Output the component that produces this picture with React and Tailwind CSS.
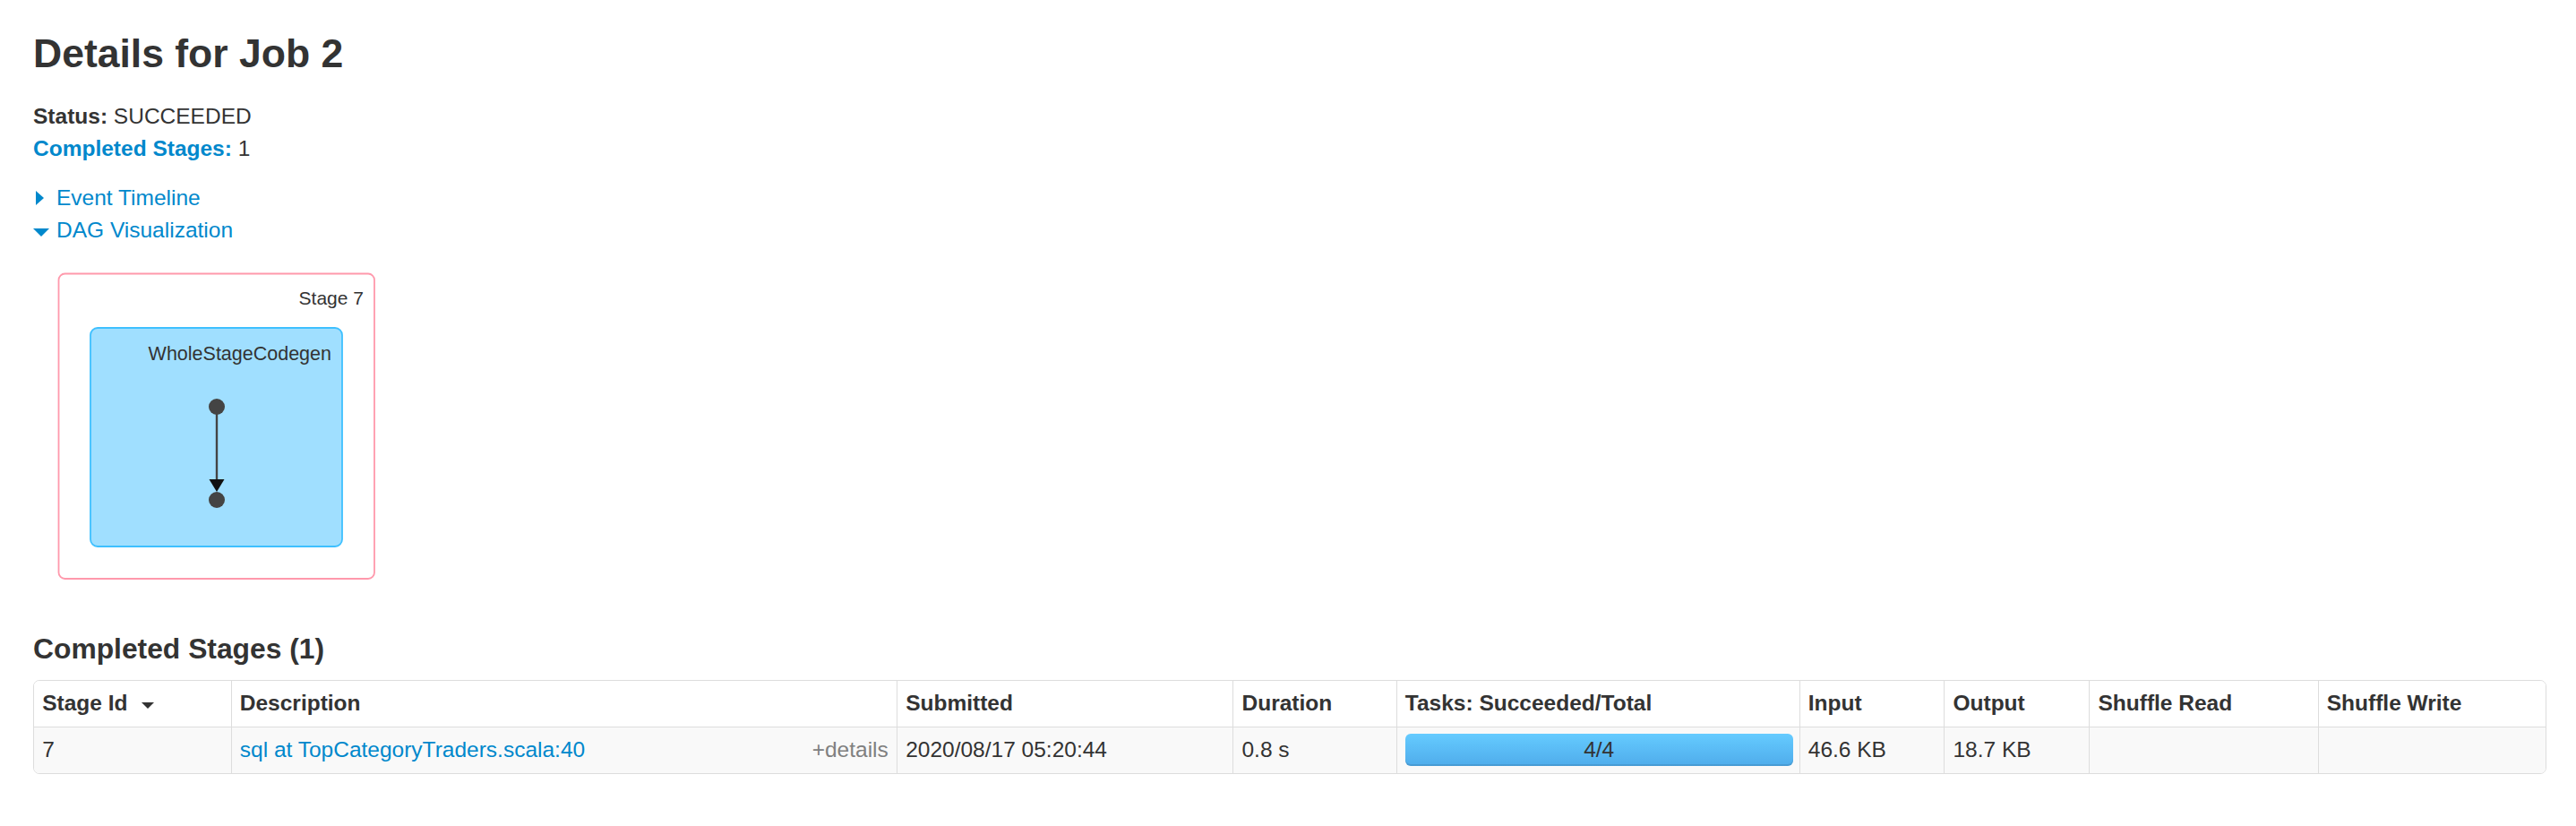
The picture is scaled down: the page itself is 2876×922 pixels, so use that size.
import React from 'react';

const font = { fontFamily: '"Liberation Sans", Arial, Helvetica, sans-serif' };

const headers = ['Stage Id', 'Description', 'Submitted', 'Duration', 'Tasks: Succeeded/Total', 'Input', 'Output', 'Shuffle Read', 'Shuffle Write'];

function Arrow({ open }) {
  if (open) {
    return <span className="inline-block w-0 h-0 mt-[3px] border-x-[9px] border-x-transparent border-t-[9px] border-t-[#0088cc]" />;
  }
  return <span className="inline-block w-0 h-0 ml-[3px] border-y-[8.5px] border-y-transparent border-l-[9.5px] border-l-[#0088cc]" />;
}

function DagViz() {
  return (
    <svg width="366" height="352" className="block ml-[23px] mt-[24px]">
      <rect x="5.5" y="5.5" width="352.5" height="340.5" rx="7" fill="#ffffff" stroke="#ff99ac" strokeWidth="1.8" />
      <text x="346" y="40" textAnchor="end" fontSize="21" fill="#333" style={font}>Stage 7</text>
      <rect x="41" y="66" width="281" height="244" rx="8" fill="#a0dfff" stroke="#3ec0ff" strokeWidth="1.8" />
      <text x="310" y="102" textAnchor="end" fontSize="21.5" fill="#333" style={font}>WholeStageCodegen</text>
      <line x1="182" y1="160" x2="182" y2="237" stroke="#444" strokeWidth="2.4" />
      <path d="M173.5 235 L190.5 235 L182 249 Z" fill="#111" />
      <circle cx="182" cy="154" r="9" fill="#444" />
      <circle cx="182" cy="258" r="9" fill="#444" />
    </svg>
  );
}

export default function App() {
  return (
    <div className="bg-white min-h-[922px] pl-[37px] pr-[33px] text-[#333] text-[24.5px] leading-[36.7px]" style={font}>
      <h3 className="mt-[36px] text-[44.5px] leading-[48px] font-bold">Details for Job 2</h3>

      <ul className="mt-[27.7px]">
        <li><strong>Status:</strong> SUCCEEDED</li>
        <li><a className="font-bold text-[#0088cc]">Completed Stages:</a> 1</li>
      </ul>

      <div className="mt-[17.6px] text-[#0088cc]">
        <div className="flex items-center">
          <span className="w-[26px] flex"><Arrow /></span>
          <a>Event Timeline</a>
        </div>
        <div className="flex items-center">
          <span className="w-[26px] flex"><Arrow open /></span>
          <a>DAG Visualization</a>
        </div>
      </div>

      <DagViz />

      <h4 className="mt-[54.7px] text-[31.8px] leading-[35px] font-bold">Completed Stages (1)</h4>

      <div className="mt-[17.5px] border border-[#ddd] rounded-[7px] overflow-hidden grid grid-cols-[219.6px_743.4px_375.3px_182.3px_450px_161.7px_162px_255.3px_255px]">
        {headers.map((h, i) => (
          <div key={h} className={`px-[9.2px] py-[7px] font-bold bg-white flex items-center ${i > 0 ? 'border-l border-[#ddd]' : ''}`}>
            {h}
            {i === 0 && <span className="inline-block w-0 h-0 ml-[16px] mt-[3px] border-x-[7px] border-x-transparent border-t-[7px] border-t-[#333]" />}
          </div>
        ))}

        <div className="px-[9.2px] py-[7px] bg-[#f9f9f9] border-t border-[#ddd]">7</div>
        <div className="px-[9.2px] py-[7px] bg-[#f9f9f9] border-t border-l border-[#ddd] flex justify-between">
          <a className="text-[#0088cc]">sql at TopCategoryTraders.scala:40</a>
          <span className="text-[#808080]">+details</span>
        </div>
        <div className="px-[9.2px] py-[7px] bg-[#f9f9f9] border-t border-l border-[#ddd]">2020/08/17 05:20:44</div>
        <div className="px-[9.2px] py-[7px] bg-[#f9f9f9] border-t border-l border-[#ddd]">0.8 s</div>
        <div className="pl-[9.2px] pr-[7px] py-[7px] bg-[#f9f9f9] border-t border-l border-[#ddd]">
          <div className="h-[36px] rounded-[6px] bg-gradient-to-b from-[#65cbff] to-[#4faceb] shadow-[inset_0_-2px_0_rgba(0,0,0,0.1)] text-center leading-[36px]">4/4</div>
        </div>
        <div className="px-[9.2px] py-[7px] bg-[#f9f9f9] border-t border-l border-[#ddd]">46.6 KB</div>
        <div className="px-[9.2px] py-[7px] bg-[#f9f9f9] border-t border-l border-[#ddd]">18.7 KB</div>
        <div className="px-[9.2px] py-[7px] bg-[#f9f9f9] border-t border-l border-[#ddd]"></div>
        <div className="px-[9.2px] py-[7px] bg-[#f9f9f9] border-t border-l border-[#ddd]"></div>
      </div>
    </div>
  );
}
